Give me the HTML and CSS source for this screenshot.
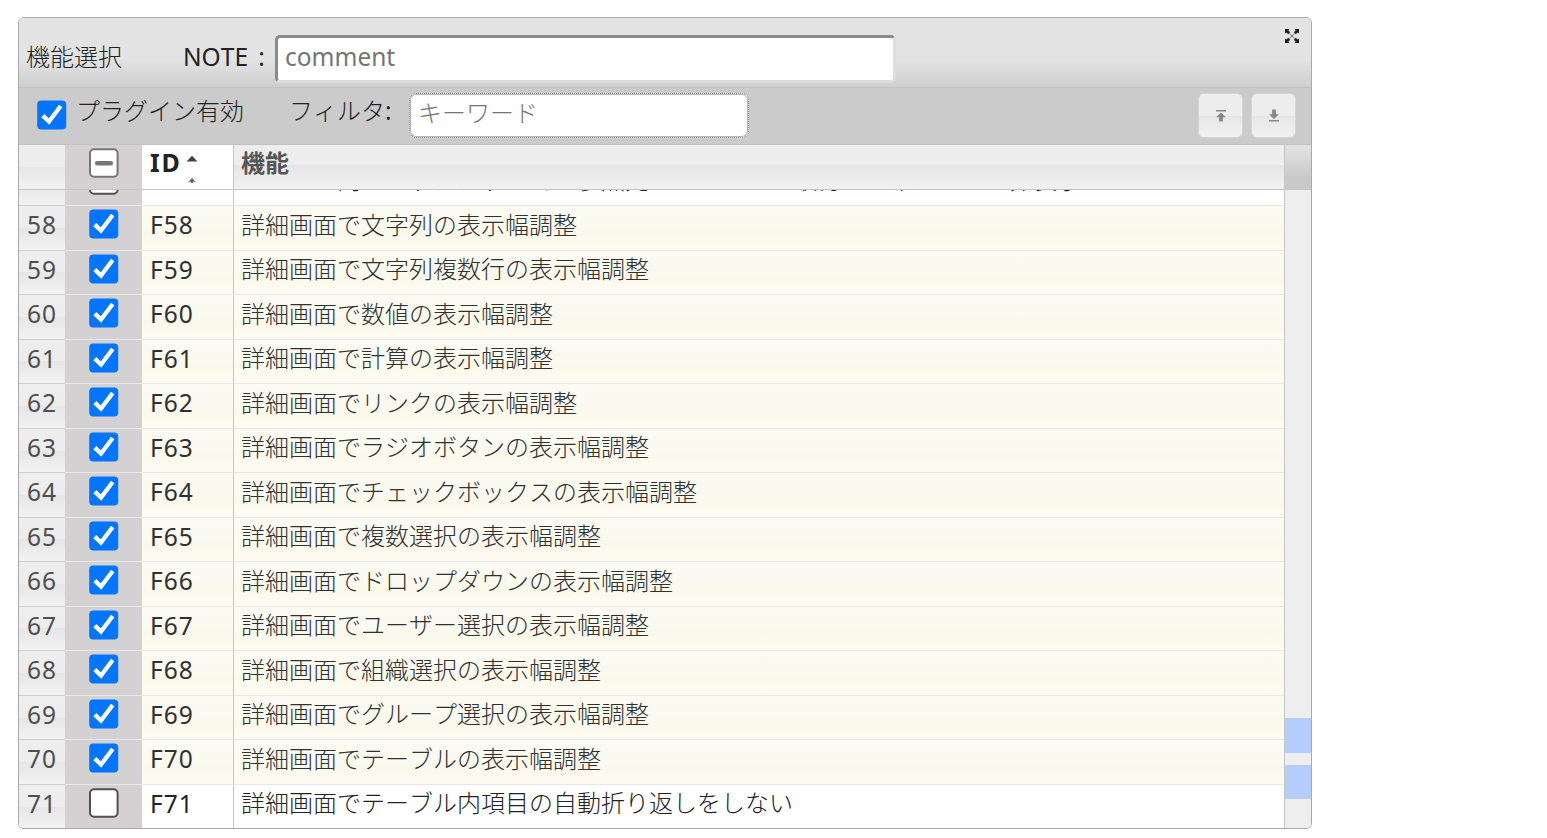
FILE: index.html
```
<!DOCTYPE html>
<html lang="ja">
<head>
  <meta charset="UTF-8" />
  <title>機能選択</title>
  <link rel="stylesheet" href="styles.css">
</head>
<body>

  <svg class="defs" width="0" height="0">
    <symbol id="check-on" viewBox="0 0 30 30">
      <rect x="0.2" y="0.5" width="29" height="29" rx="4" fill="#0075ff"/>
      <path d="M5.8 15.6 L12 21.6 L23.7 6" fill="none" stroke="#fff" stroke-width="4.3"/>
    </symbol>
    <symbol id="check-off" viewBox="0 0 30 30">
      <rect x="1" y="1.2" width="27.6" height="27.6" rx="4" fill="#fff" stroke="#505050" stroke-width="2"/>
    </symbol>
    <symbol id="check-mixed" viewBox="0 0 30 30">
      <rect x="1" y="1.2" width="27.6" height="27.6" rx="4" fill="#fff" stroke="#767676" stroke-width="2"/>
      <rect x="6" y="13" width="18" height="4.4" rx="2" fill="#767676"/>
    </symbol>
  </svg>

  <div class="grid">
    <div class="grid-title">
      <span class="title-name">機能選択</span>
      <label for="note">NOTE :</label>
      <input type="text" id="note" placeholder="comment">
      <svg class="icon-full" viewBox="0 0 14 14">
        <path d="M0 0h4.6L3.4 1.4 5.2 3.2 3.2 5.2 1.4 3.4 0 4.6zM14 0v4.6l-1.4-1.2-1.8 1.8-2-2 1.8-1.8L9.4 0zM0 14V9.4l1.4 1.2 1.8-1.8 2 2-1.8 1.8L4.6 14zM14 14H9.4l1.2-1.4-1.8-1.8 2-2 1.8 1.8L14 9.4z"/>
        <path class="cross" d="M4.5 4.5l5 5M9.5 4.5l-5 5"/>
      </svg>
    </div>

    <div class="grid-toolbar">
      <svg class="check"><use href="#check-on"/></svg>
      <span class="plugin-label">プラグイン有効</span>
      <label for="filter">フィルタ<b>:</b></label>
      <input type="text" id="filter" placeholder="キーワード">
      <div class="toolbar-buttons">
        <button><svg viewBox="0 0 12 14"><path d="M1 1h10v1.6H1zM6 3.4l5 4.8H7.9V12.6H4.1V8.2H1z"/></svg></button>
        <button><svg viewBox="0 0 12 14"><path d="M4.1 0.6h3.8v4.6H11L6 10 1 5.2h3.1zM1 11h10v1.6H1z"/></svg></button>
      </div>
    </div>

    <div class="grid-header">
      <div class="num"></div>
      <div class="state"><svg class="check"><use href="#check-mixed"/></svg></div>
      <div class="id">ID
        <svg class="sort" viewBox="0 0 12 30">
          <path d="M0.5 7.4 L6 1.8 L11.5 7.4z"/>
          <path class="sort-small" d="M2 28.5 L6 23.8 L10 28.5 L7.2 27.4 V29 H4.8 V27.4z"/>
        </svg>
      </div>
      <div class="name">機能</div>
      <div class="corner"></div>
    </div>

    <div class="grid-body">
      <div class="rows" id="rows"></div>
      <div class="scrollbar">
        <div class="mark"></div>
        <div class="mark"></div>
      </div>
    </div>
  </div>

  <script>
    const features = [
      [57, 'レコード内のルックアップでの参照元のレコードの取得・キャンセルの非表示', false],
      [58, '詳細画面で文字列の表示幅調整', true],
      [59, '詳細画面で文字列複数行の表示幅調整', true],
      [60, '詳細画面で数値の表示幅調整', true],
      [61, '詳細画面で計算の表示幅調整', true],
      [62, '詳細画面でリンクの表示幅調整', true],
      [63, '詳細画面でラジオボタンの表示幅調整', true],
      [64, '詳細画面でチェックボックスの表示幅調整', true],
      [65, '詳細画面で複数選択の表示幅調整', true],
      [66, '詳細画面でドロップダウンの表示幅調整', true],
      [67, '詳細画面でユーザー選択の表示幅調整', true],
      [68, '詳細画面で組織選択の表示幅調整', true],
      [69, '詳細画面でグループ選択の表示幅調整', true],
      [70, '詳細画面でテーブルの表示幅調整', true],
      [71, '詳細画面でテーブル内項目の自動折り返しをしない', false]
    ];

    document.getElementById('rows').innerHTML = features.map(([no, name, on]) => `
      <div class="row${on ? ' selected' : ''}">
        <div class="num">${no}</div>
        <div class="state"><svg class="check"><use href="#check-${on ? 'on' : 'off'}"/></svg></div>
        <div class="id">F${no}</div>
        <div class="name">${name}</div>
      </div>`).join('');
  </script>
</body>
</html>
```
FILE: styles.css
```
* {
  box-sizing: border-box;
}

body {
  margin: 17px 0 0 18px;
  background: #fff;
  color: #222;
  font-family: "Noto Sans CJK JP", sans-serif;
  font-size: 24px;
  font-weight: 300;
  font-kerning: none;
  line-height: 32px;
}

.defs {
  display: block;
  position: absolute;
}

.grid {
  display: flex;
  flex-direction: column;
  width: 1294px;
  height: 812px;
  border: 1px solid #a9a9a9;
  border-radius: 6px;
  overflow: hidden;
}

input {
  font: inherit;
  background: #fff;
  outline: none;
}

input::placeholder {
  color: #757575;
  opacity: 1;
}

.check {
  display: block;
  flex: none;
  width: 30px;
  height: 30px;
}

/* latin text and numbers */
.num,
.id,
.grid-title label,
.grid-toolbar label b,
#note {
  font-family: "Noto Sans", sans-serif;
  font-size: 24.5px;
  font-weight: 400;
}

/* title */
.grid-title {
  display: flex;
  flex: none;
  height: 70px;
  padding: 17px 12px 0 7px;
  border-bottom: 1px solid #c2c2c2;
  background: linear-gradient(#e3e3e3 60%, #cfcfcf);
}

.title-name {
  width: 157px;
  padding-top: 5px;
}

.grid-title label {
  width: 92px;
  padding-top: 6px;
  word-spacing: 4px;
}

#note {
  width: 621px;
  height: 48px;
  padding: 0 7px 5px;
  border: 3px solid;
  border-color: #8b8b8b #e1dcdc #e1dcdc #8b8b8b;
  border-radius: 5px;
}

.icon-full {
  width: 14px;
  height: 14px;
  margin: -6px 0 0 auto;
  fill: #222;
}

.cross {
  stroke: #777;
  stroke-width: 1;
}

/* toolbar */
.grid-toolbar {
  display: flex;
  flex: none;
  height: 57px;
  padding: 5px 15px 0 18px;
  border-bottom: 1px solid #c2c2c2;
  background: #cbcbcb;
}

.grid-toolbar .check {
  margin-top: 7px;
}

.plugin-label {
  width: 222px;
  padding: 1px 0 0 9px;
}

.grid-toolbar label {
  width: 120px;
  padding-top: 1px;
}

#filter {
  width: 340px;
  height: 45px;
  padding: 0 8px 8px;
  border: 1px dotted #777;
  border-radius: 7px;
  box-shadow: inset 0 0 0 1px #b5b5b5;
}

.toolbar-buttons {
  display: flex;
  gap: 8px;
  margin-left: auto;
}

.toolbar-buttons button {
  display: flex;
  align-items: center;
  justify-content: center;
  width: 45px;
  height: 45px;
  padding: 0;
  border: 1px solid #d4d4d4;
  border-radius: 6px;
  background: linear-gradient(#eee 0%, #ededed 50%, #e6e6e6 50%, #f2f2f2 100%);
}

.toolbar-buttons svg {
  width: 12px;
  height: 14px;
  fill: #888;
}

/* cells */
.num {
  flex: none;
  width: 46px;
  padding-left: 8px;
  color: #4f4f4f;
  letter-spacing: 1px;
  background: linear-gradient(#eee 0%, #ededed 50%, #e6e6e6 50%, #f2f2f2 100%);
}

.state {
  flex: none;
  width: 77px;
  padding: 3px 0 0 24px;
  background: #d4d1d2;
}

.id {
  flex: none;
  width: 92px;
  padding-left: 8px;
  border-right: 1px solid #c5c5c5;
  letter-spacing: 1px;
}

.name {
  flex: 1;
  padding-left: 7px;
  white-space: nowrap;
}

/* header */
.grid-header {
  display: flex;
  flex: none;
  height: 45px;
  border-bottom: 1px solid #c5c5c5;
}

.grid-header .id {
  display: flex;
  padding-top: 1px;
  font-size: 25px;
  font-weight: bold;
  letter-spacing: 1.8px;
  background: #fff;
}

.grid-header .name {
  padding-top: 1px;
  color: #555;
  font-weight: bold;
  background: linear-gradient(#eee 0%, #ededed 46%, #e6e6e6 46%, #f2f2f2 100%);
}

.sort {
  width: 12px;
  height: 30px;
  margin: 8px 0 0 4px;
  fill: #444;
}

.sort-small {
  fill: #666;
}

.corner {
  width: 27px;
  border-left: 1px solid #c5c5c5;
  background: linear-gradient(#e3e3e3, #c9c9c9 75%);
}

/* body, scrolled down to the last row */
.grid-body {
  display: flex;
  flex: 1;
  min-height: 0;
}

.rows {
  display: flex;
  flex: 1;
  flex-direction: column;
  justify-content: flex-end;
  overflow: hidden;
}

.row {
  display: flex;
  flex: none;
  height: 44.5px;
  background: #fff;
}

.row > div {
  border-bottom: 1px solid #e8e8e8;
}

.row .num {
  border-bottom-color: #cfcfcf;
}

.row .num,
.row .id {
  padding-top: 3px;
}

.row .name {
  padding-top: 1.5px;
}

.row:last-child {
  height: 43.5px;
}

.row:last-child > div {
  border-bottom: none;
}

.selected .id,
.selected .name {
  color: #303030;
  background: linear-gradient(#fbfbf3 0%, #fbfaf0 50%, #faf9ea 60%, #fffbf3 100%);
}

.scrollbar {
  display: flex;
  flex-direction: column;
  justify-content: flex-end;
  gap: 12px;
  width: 27px;
  padding-bottom: 29px;
  border-left: 1px solid #c5c5c5;
  background: #eee;
}

.mark {
  height: 34.5px;
  background: #b5cdfc;
}
```
